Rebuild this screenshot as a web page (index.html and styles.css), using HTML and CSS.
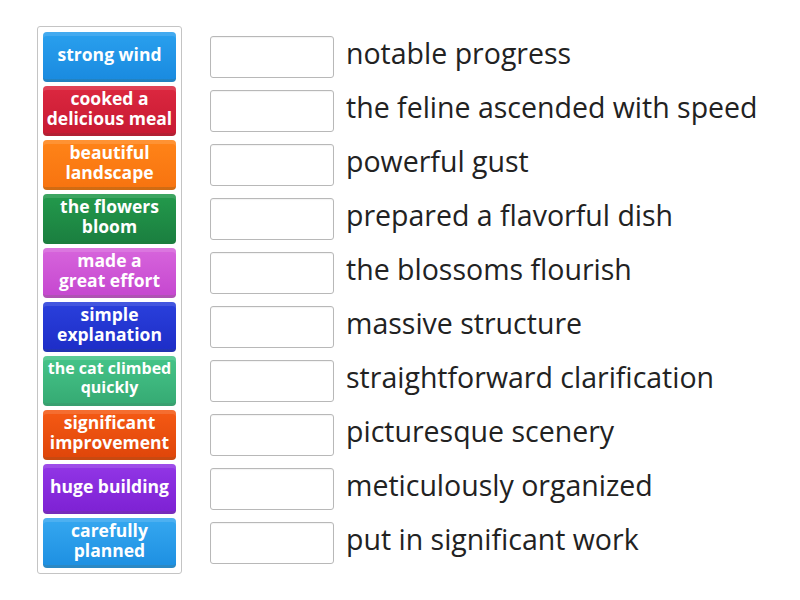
FILE: index.html
```html
<!DOCTYPE html>
<html lang="en">
<head>
<meta charset="utf-8">
<title>Match up</title>
<link rel="stylesheet" href="styles.css">
</head>
<body>
<main class="game">
  <section class="bank">
    <div class="tile c1">strong wind</div>
    <div class="tile c2">cooked a delicious meal</div>
    <div class="tile c3">beautiful landscape</div>
    <div class="tile c4">the flowers bloom</div>
    <div class="tile c5">made a<br>great effort</div>
    <div class="tile c6">simple explanation</div>
    <div class="tile c7 small">the cat climbed quickly</div>
    <div class="tile c8">significant improvement</div>
    <div class="tile c9">huge building</div>
    <div class="tile c10">carefully planned</div>
  </section>
  <section class="targets">
    <div class="row"><div class="slot"></div><span class="label">notable progress</span></div>
    <div class="row"><div class="slot"></div><span class="label">the feline ascended with speed</span></div>
    <div class="row"><div class="slot"></div><span class="label">powerful gust</span></div>
    <div class="row"><div class="slot"></div><span class="label">prepared a flavorful dish</span></div>
    <div class="row"><div class="slot"></div><span class="label">the blossoms flourish</span></div>
    <div class="row"><div class="slot"></div><span class="label">massive structure</span></div>
    <div class="row"><div class="slot"></div><span class="label">straightforward clarification</span></div>
    <div class="row"><div class="slot"></div><span class="label">picturesque scenery</span></div>
    <div class="row"><div class="slot"></div><span class="label">meticulously organized</span></div>
    <div class="row"><div class="slot"></div><span class="label">put in significant work</span></div>
  </section>
</main>
</body>
</html>
```

FILE: styles.css
```css
html, body {
  margin: 0;
  padding: 0;
  background: #ffffff;
  font-family: "Open Sans", "Noto Sans", sans-serif;
}

.game {
  display: flex;
  align-items: flex-start;
  gap: 28px;
  padding: 26px 0 0 37px;
}

.bank {
  display: flex;
  flex-direction: column;
  gap: 4px;
  padding: 5px;
  border: 1px solid #c4c4c4;
  border-radius: 3px;
  width: 133px;
}

.tile {
  box-sizing: border-box;
  height: 50px;
  display: flex;
  align-items: center;
  justify-content: center;
  text-align: center;
  color: #ffffff;
  font-weight: 700;
  font-size: 17.5px;
  line-height: 20px;
  padding: 0 1px 3px;
  border-radius: 4px;
  border-bottom: 3px solid rgba(0, 0, 0, 0.18);
  box-shadow: inset 0 4px 0 rgba(255, 255, 255, 0.12);
}

.tile.small {
  font-size: 16px;
  line-height: 19px;
}

.c1 { background: linear-gradient(#2aa0ee, #1a8be0); }
.c2 { background: linear-gradient(#dc2840, #c81a33); }
.c3 { background: linear-gradient(#ff8418, #f87410); }
.c4 { background: linear-gradient(#239a4c, #1b8040); }
.c5 { background: linear-gradient(#d765dc, #c648d0); }
.c6 { background: linear-gradient(#2a40dc, #1e2ec8); }
.c7 { background: linear-gradient(#46c589, #36ab74); }
.c8 { background: linear-gradient(#f55a14, #e0460a); }
.c9 { background: linear-gradient(#9236e6, #7e22d4); }
.c10 { background: linear-gradient(#36a8f0, #1e90e2); }

.targets {
  display: flex;
  flex-direction: column;
  padding-top: 4px;
}

.row {
  height: 54px;
  display: flex;
  align-items: center;
  gap: 12px;
}

.slot {
  box-sizing: border-box;
  width: 124px;
  height: 42px;
  border: 1px solid #b8b8b8;
  border-radius: 3px;
  background: #ffffff;
  box-shadow: inset 0 1px 1px rgba(0,0,0,0.05);
}

.label {
  font-size: 28.5px;
  line-height: 34px;
  color: #222222;
  white-space: nowrap;
  margin-top: -8px;
}
```
